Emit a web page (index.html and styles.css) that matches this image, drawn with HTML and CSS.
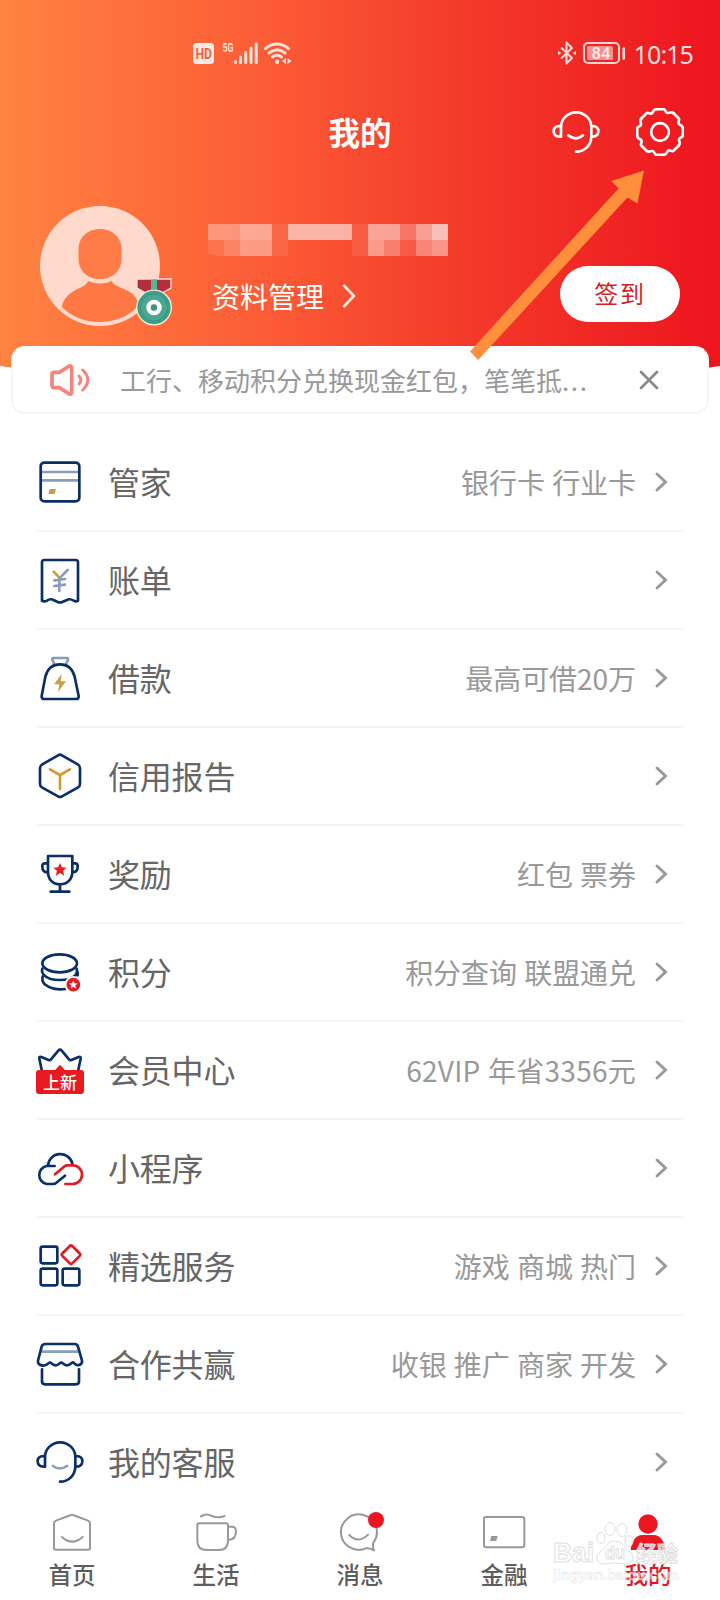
FILE: index.html
```html
<!DOCTYPE html>
<html lang="zh-CN">
<head>
<meta charset="utf-8">
<title>我的</title>
<link rel="stylesheet" href="styles.css">
</head>
<body>
<svg class="defs" aria-hidden="true">
  <defs>
    <symbol id="chev" viewBox="0 0 14 22"><path d="M3 3 11.500 11 3 19"/></symbol>
    <symbol id="headset" viewBox="0 0 144 144">
      <path d="M27 86V57a45.500 44 0 0 1 91 0v27c0 28-20 47-46 47M27 54h-4C9 54 5 62 5 70s4 16 18 16h4M118 54h3c13 0 18 7 18 16s-5 16-18 16h-3"/>
    </symbol>
    <path id="tooth" d="M-11-68.500H11C17-68 16-58 22-57S34-63 40.700-56.200"/>
    <path id="star" d="M0-20 5.600-7 20-6 9 3.500 12.500 18 0 10-12.500 18-9 3.500-20-6-5.600-7Z"/>
  </defs>
</svg>

<div class="phone">
  <header class="hero">
    <div class="status">
      <svg class="status-left" width="104" height="26" viewBox="0 0 104 26">
        <rect x="0" y="3" width="21" height="21" rx="3.500" fill="#ffeae3"/>
        <text class="hd" x="2.500" y="18.500" textLength="16.500" lengthAdjust="spacingAndGlyphs">HD</text>
        <text class="g5" x="29.500" y="12" textLength="11" lengthAdjust="spacingAndGlyphs">5G</text>
        <path d="M42.500 21.500v1M47.500 17v5.500M52.700 12.500v10M58 8v14.500M63.200 4v18.500" stroke="#ffe3da" stroke-width="3" stroke-linecap="round"/>
        <path d="M72.500 8.500q11.500-9 23 0M76 13q8-6.500 16 0M79.500 17q4.500-3.500 9 0" fill="none" stroke="#ffe3da" stroke-width="2.900" stroke-linecap="round"/>
        <circle cx="84" cy="21.700" r="2.200" fill="#ffe3da"/>
        <path d="M93 18v6l-4-3zM94.500 18v6l4-3z" fill="#ffe3da"/>
      </svg>
      <div class="status-right">
        <svg width="18" height="26" viewBox="0 0 18 26"><path d="M3 7.500 14 18 8.500 23.500V2.500L14 8 3 18.500" fill="none" stroke="#ffdcd8" stroke-width="2" stroke-linejoin="round"/><path d="M0 11l3.500 2L0 15zM18 11l-3.500 2 3.500 2z" fill="#ffdcd8"/></svg>
        <svg width="43" height="26" viewBox="0 0 43 26">
          <rect x="1" y="3" width="35" height="20" rx="4" fill="none" stroke="#ffd6d3" stroke-width="2"/>
          <rect x="4" y="6" width="26" height="14" rx="1.500" fill="#f78f8b"/>
          <path d="M40.700 8.500v10" stroke="#ffd6d3" stroke-width="2.600" stroke-linecap="round"/>
          <text class="batt" x="8.500" y="19" textLength="19" lengthAdjust="spacingAndGlyphs">84</text>
        </svg>
        <span class="clock">10:15</span>
      </div>
    </div>
    <div class="titlebar">
      <h1>我的</h1>
      <div class="actions">
        <svg width="48" height="48" viewBox="0 0 144 144" class="white-line"><use href="#headset"/><path d="M49 82q23 18 44 0"/></svg>
        <svg width="48" height="48" viewBox="0 0 144 144" class="white-line">
          <g transform="translate(72 72)"><circle r="26.500"/>
            <use href="#tooth"/><use href="#tooth" transform="rotate(45)"/><use href="#tooth" transform="rotate(90)"/><use href="#tooth" transform="rotate(135)"/><use href="#tooth" transform="rotate(180)"/><use href="#tooth" transform="rotate(225)"/><use href="#tooth" transform="rotate(270)"/><use href="#tooth" transform="rotate(315)"/>
          </g>
        </svg>
      </div>
    </div>
    <div class="profile">
      <svg class="avatar" width="136" height="124" viewBox="0 0 136 124">
        <circle cx="60" cy="60" r="60" fill="#ffd9cb"/>
        <path d="M60 23c13 0 21.500 9 21.500 20v10c0 12-9 20-21.500 20s-21.500-8-21.500-20V43c0-11 8.500-20 21.500-20Z" fill="#ff7b48"/>
        <path d="M48 75q12 5 24 0c2 8 26 7 26 25q-14 15.500-38 16-24-.5-38-15C25 83 46 83 48 75Z" fill="#ff7844"/>
        <path d="M97 73h34v9l-9 5h-16l-9-5Z" fill="#b52c3d" stroke="#fbe1d2" stroke-width="1.300"/>
        <path d="M111 73.500h6v10h-6z" fill="#58b497"/>
        <circle cx="114" cy="101.500" r="17.300" fill="#3e9e88" stroke="#f7eee0" stroke-width="1.300"/>
        <circle cx="114" cy="101.500" r="13.500" fill="#4aa791" stroke="#3a9580"/>
        <circle cx="114" cy="101.500" r="5.500" fill="#3d947f" stroke="#fff" stroke-width="4.500"/>
      </svg>
      <div class="who">
        <svg class="masked" width="240" height="32" viewBox="0 0 240 32" fill="#fcebe8" shape-rendering="crispEdges">
          <path opacity=".38" d="M0 0h32v16H0z"/><path opacity=".52" d="M32 0h32v16H32z"/><path opacity=".1" d="M64 0h16v32H64z"/><path opacity=".64" d="M80 0h64v16H80z"/><path opacity=".1" d="M144 0h16v32h-16z"/><path opacity=".56" d="M160 0h32v16h-32z"/><path opacity=".3" d="M192 0h16v16h-16z"/><path opacity=".55" d="M208 0h16v16h-16z"/><path opacity=".75" d="M224 0h16v16h-16z"/>
          <path opacity=".12" d="M0 16h16v16H8L0 29z"/><path opacity=".25" d="M16 16h16v16H16z"/><path opacity=".44" d="M32 16h32v16H32z"/><path opacity=".5" d="M160 16h16v16h-16z"/><path opacity=".34" d="M176 16h16v16h-16z"/><path opacity=".14" d="M192 16h16v16h-16z"/><path opacity=".4" d="M208 16h16v16h-16z"/><path opacity=".5" d="M224 16h16v16h-16z"/>
        </svg>
        <a class="manage">资料管理<svg width="15" height="24" viewBox="0 0 14 22"><path d="M2 1.500 11 11 2 20.500"/></svg></a>
      </div>
      <button class="sign">签到</button>
    </div>
  </header>

  <section class="notice">
    <svg width="42" height="34" viewBox="0 0 126 102" fill="none" stroke="#f5847c" stroke-width="11" stroke-linejoin="round" stroke-linecap="round">
      <path d="M6 35q0-7 7-7h15L58 9q7-3 7 5v74q0 8-7 5L28 74H13q-7 0-7-7Z"/><path d="M87 39q11 12 0 24M98 21q31 30 0 60" stroke-width="9"/>
    </svg>
    <p>工行、移动积分兑换现金红包，笔笔抵<span class="dots">...</span></p>
    <svg class="close" width="20" height="20" viewBox="0 0 20 20"><path d="M2 2 18 18M18 2 2 18"/></svg>
  </section>

  <main class="list">
    <div class="row"><svg class="ico" viewBox="0 0 144 144"><path class="pale" d="M16 42H128M16 67H128"/><rect x="14" y="14" width="116" height="116" rx="11"/><path class="goldfill" d="M41 93h19l-4 15H37z"/></svg><span class="label">管家</span><span class="value">银行卡 行业卡</span><svg class="go"><use href="#chev"/></svg></div>
    <div class="row"><svg class="ico" viewBox="0 0 144 144"><path d="M18 134V19q0-7 7-7h94q7 0 7 7v115q-6 4-13 0-12-8-22-1l-12 5q-7 3-14 0l-11-5q-10-7-21 1-9 4-15 0Z"/><path class="gold" d="M53 47 70 65"/><path class="pale" d="M95 42 70 67v38M55 73l32-4M55 90l32-4"/></svg><span class="label">账单</span><span class="value"></span><svg class="go"><use href="#chev"/></svg></div>
    <div class="row"><svg class="ico" viewBox="0 0 144 144"><path class="pale" d="M56 33 49 17q-1-5 4-5h40q4 0 3 5l-7 16"/><path d="M28 68Q38 31 72 31t44 37l12 58q1 9-8 9H25q-9 0-8-9Z"/><path class="goldfill" d="M77 60 54 91h16l-4 24 24-33H74z"/></svg><span class="label">借款</span><span class="value">最高可借20万</span><svg class="go"><use href="#chev"/></svg></div>
    <div class="row"><svg class="ico" viewBox="0 0 144 144"><path d="M66 10q6-4 12 0l47 27q7 4 7 11v48q0 7-7 11l-47 26q-6 4-12 0l-47-26q-7-4-7-11V48q0-7 7-11Z"/><path class="gold" d="M42 52 72 69l30-17M72 69v42"/></svg><span class="label">信用报告</span><span class="value"></span><svg class="go"><use href="#chev"/></svg></div>
    <div class="row"><svg class="ico" viewBox="0 0 144 144"><path d="M36 18h73v47c0 23-15 38-37 38S36 88 36 65ZM35 40h-8q-8 0-8 8v2q0 16 16 17M109 40h8q8 0 8 8v2q0 16-16 17M72 103v20M44 125h56"/><use class="redfill" href="#star" transform="translate(72 59)"/></svg><span class="label">奖励</span><span class="value">红包 票券</span><svg class="go"><use href="#chev"/></svg></div>
    <div class="row"><svg class="ico" viewBox="0 0 144 144"><ellipse cx="71" cy="46" rx="52" ry="27"/><path d="M19 62q-4 10 6 20c18 19 75 18 93 0q8-10 4-20M20 86q-4 11 6 23c14 12 39 18 62 14M125 74v8"/><circle cx="112" cy="110" r="26" fill="#fff" stroke="none"/><circle class="redfill" cx="112" cy="110" r="20.500"/><use href="#star" transform="translate(112 110) scale(.63)" class="whitefill"/></svg><span class="label">积分</span><span class="value">积分查询 联盟通兑</span><svg class="go"><use href="#chev"/></svg></div>
    <div class="row"><div class="ico crown"><svg class="ico" viewBox="0 0 144 144"><path d="M18 76 10 38q-2-7 6-5l22 9q4 2 7-2L67 14q5-6 10 0l22 26q3 4 7 2l22-9q7-2 6 5l-8 38"/><path class="redfill" d="M56 74 68 60q4-4 8 0l12 14z"/></svg><b>上新</b></div><span class="label">会员中心</span><span class="value vip">62VIP 年省3356元</span><svg class="go"><use href="#chev"/></svg></div>
    <div class="row"><svg class="ico" viewBox="0 0 144 144"><path d="M109 58a37 36 0 0 0-73 8M56 66H32a27.500 27.500 0 0 0 0 54h20q5 0 8-3l27-22"/><path class="red" d="M57 91 83 69q5-5 11-5h16a28 28 0 0 1 0 56H88"/></svg><span class="label">小程序</span><span class="value"></span><svg class="go"><use href="#chev"/></svg></div>
    <div class="row"><svg class="ico" viewBox="0 0 144 144"><rect x="14" y="14" width="50" height="50" rx="6"/><rect x="14" y="80" width="50" height="50" rx="6"/><rect x="80" y="80" width="50" height="50" rx="6"/><rect class="red" x="84" y="17" width="42" height="42" rx="5" transform="rotate(45 105 38)"/></svg><span class="label">精选服务</span><span class="value">游戏 商城 热门</span><svg class="go"><use href="#chev"/></svg></div>
    <div class="row"><svg class="ico" viewBox="0 0 144 144"><path class="pale" d="M20 35H124"/><path d="M28 12h88q8 0 10 8l12 42c2 13-14 18-23 8q-5-6-9 0-13 12-26 0-4-4-9 0-12 12-25 0-4-5-9 0c-10 11-33 8-31-8L17 20q2-8 11-8ZM18 88v36q0 9 9 9h93q9 0 9-9V88"/></svg><span class="label">合作共赢</span><span class="value">收银 推广 商家 开发</span><svg class="go"><use href="#chev"/></svg></div>
    <div class="row"><svg class="ico" viewBox="0 0 144 144"><use href="#headset"/><path class="pale" d="M51 84q20 15 42 0"/></svg><span class="label">我的客服</span><span class="value"></span><svg class="go"><use href="#chev"/></svg></div>
  </main>

  <nav class="tabs">
    <a><svg viewBox="0 0 144 144"><path d="M24 38 69 21q3-1 6 0l45 17q6 3 6 9v72q0 6-6 6H24q-6 0-6-6V47q0-6 6-9ZM42 87q30 28 62 0"/></svg>首页</a>
    <a><svg viewBox="0 0 144 144"><path d="M22 46h80q6 0 6 6v46q0 28-28 28H44q-28 0-28-28V52q0-6 6-6ZM108 56h12q12 0 12 14 0 26-24 26M27 25q15-10 33-1 17 8 38 0"/></svg>生活</a>
    <a><svg viewBox="0 0 144 144"><path d="M112 104a54 53 0 1 0-22 17q13-1 24 6-5-14-2-23ZM40 81q28 28 56-1"/><circle cx="120" cy="36" r="24" fill="#ec1620" stroke="none"/></svg>消息</a>
    <a><svg viewBox="0 0 144 144"><rect x="12" y="27" width="121" height="91" rx="7"/><path d="M34 84h19l-4 15H30z" fill="#999" stroke="none"/></svg>金融</a>
    <a class="on"><svg viewBox="0 0 144 144"><g fill="#ec1620" stroke="none"><circle cx="72" cy="48" r="29"/><path d="M20 126c2-28 17-45 35-45h34c18 0 33 17 35 45Z"/></g></svg>我的</a>
  </nav>

  <svg class="arrow" width="180" height="194" viewBox="468 168 180 194"><path d="M644 170.500 611.500 181l7 7.500L470 351.500l8 8.500L627.500 197.500l10 6Z" fill="#ff8f3a"/></svg>
  <svg class="mark" width="136" height="68" viewBox="0 0 136 68">
    <g fill="#fff" fill-opacity=".85" stroke="#dedede" stroke-width="1">
      <text x="2" y="42" font-size="28" textLength="41" lengthAdjust="spacingAndGlyphs">Bai</text>
      <ellipse cx="50" cy="18" rx="4" ry="5.500"/><ellipse cx="59" cy="9" rx="5" ry="6.500"/><ellipse cx="71" cy="10" rx="5" ry="6.500"/><ellipse cx="78" cy="21" rx="4" ry="5.500"/>
      <path d="M64 21c8 0 10 8 16 12 4 4 2 11-5 11-4 0-7-1-11-1s-7 1-11 1c-7 0-9-7-5-11 6-4 8-12 16-12Z"/>
      <text x="54" y="39" font-size="18" textLength="20" lengthAdjust="spacingAndGlyphs">du</text>
      <text class="cn" x="85" y="41" font-size="21" textLength="42" fill-opacity=".7">经验</text>
    </g>
    <text x="2" y="60" font-size="15" textLength="126" lengthAdjust="spacingAndGlyphs" fill="#fff" fill-opacity=".5" stroke="#dcdcdc" stroke-opacity=".7" stroke-width=".6">jingyan.baidu.com</text>
  </svg>
</div>
</body>
</html>
```
FILE: styles.css
```css
* { box-sizing: border-box; }
body { margin: 0; background: #fff; font-family: "Noto Sans", "Noto Sans CJK SC", sans-serif; }
.defs { position: absolute; width: 0; height: 0; }
.phone { position: relative; width: 720px; height: 1600px; overflow: hidden; background: #fff; }
svg { flex: none; }

.hero {
  height: 400px;
  margin-bottom: -54px;
  background: linear-gradient(90deg, #ff8342 0%, #fc6037 33%, #f43d2b 62%, #ee151f 99%);
  clip-path: path("M0 0H720V366Q360 420 0 366Z");
}
.status { display: flex; justify-content: space-between; height: 100px; padding: 40px 27px 0 193px; }
.status-right { display: flex; align-items: flex-start; gap: 7px; }
.clock { margin-left: 1px; line-height: 28px; font-family: "Noto Sans", sans-serif; font-size: 25px; letter-spacing: -.9px; color: #ffdedb; }
.hd { font: bold 14px Roboto, sans-serif; fill: #f2623f; }
.g5 { font: bold 13px Roboto, sans-serif; fill: #ffe3da; }
.batt { font: 500 17px Roboto, sans-serif; fill: #ffeceb; }
.titlebar { display: grid; grid-template-columns: 1fr auto 1fr; align-items: center; height: 64px; padding: 0 36px; }
.titlebar h1 { grid-column: 2; margin: 0 0 3px; font: bold 31.500px/48px "Noto Sans CJK SC", sans-serif; color: #fff; }
.actions { display: flex; justify-content: flex-end; gap: 36px; }
.white-line { fill: none; stroke: #fff; stroke-width: 8; stroke-linecap: round; stroke-linejoin: round; }
.profile { display: flex; align-items: flex-start; padding: 42px 40px 0; }
.who { display: flex; flex-direction: column; margin: 18px auto 0 32px; }
.masked { display: block; }
.manage { display: flex; align-items: center; gap: 18px; margin: 19px 0 0 4px; font: 28px/42px "Noto Sans CJK SC", sans-serif; color: #fff; }
.manage svg { fill: none; stroke: #ffe2da; stroke-width: 2.600; stroke-linecap: round; }
.sign { width: 120px; height: 56px; margin-top: 60px; padding: 0 0 3px; border: 0; border-radius: 28px; background: #fff; color: #d61c25; font: 24px/36px "Noto Sans CJK SC", sans-serif; letter-spacing: 1.800px; }

.notice { position: relative; display: flex; align-items: center; height: 68px; margin: 0 11px; padding: 0 48px 0 37px; border: 2px solid #f5f5f5; border-top-color: #fff; border-radius: 14px; background: #fff; }
.notice p { flex: 1; margin: 0 0 0 28px; font: 26px/38px "Noto Sans CJK SC", sans-serif; color: #999; white-space: nowrap; }
.dots { letter-spacing: 1.600px; }
.close { fill: none; stroke: #8b8b8b; stroke-width: 2.800; stroke-linecap: round; }

.list { height: 1066px; margin-top: 20px; padding: 0 36px; overflow: hidden; }
.row { display: flex; align-items: center; height: 98px; border-bottom: 2px solid #f4f4f4; color: #666; }
.ico { display: block; width: 48px; height: 48px; fill: none; stroke: #0a2f66; stroke-width: 8; stroke-linecap: round; stroke-linejoin: round; }
.label { margin: -2px 0 0 24px; font: 32px/48px "Noto Sans CJK SC", sans-serif; letter-spacing: -.2px; }
.value { margin-left: auto; font: 28px/42px "Noto Sans CJK SC", sans-serif; word-spacing: 1px; letter-spacing: -.05px; color: #999; }
.vip { letter-spacing: .25px; }
.go { width: 14px; height: 22px; margin: 0 16px 0 18px; fill: none; stroke: #999; stroke-width: 2.900; stroke-linecap: round; }
.pale { stroke: #879dbd; stroke-width: 8; }
.gold { stroke: #d39a31; stroke-width: 8; }
.red { stroke: #e01b22; }
.goldfill { fill: #cb9d48; stroke: none; }
.redfill { fill: #e91a22; stroke: none; }
.whitefill { fill: #fff; stroke: none; }
.crown { position: relative; }
.crown b { position: absolute; left: 0; bottom: 0; width: 48px; height: 24px; border-radius: 3px; background: #e91a22; color: #fff; font: 500 17px/24px "Noto Sans CJK SC", sans-serif; text-align: center; }

.tabs { display: grid; grid-template-columns: repeat(5, 1fr); height: 100px; padding-top: 8px; background: #fff; }
.tabs a { display: flex; flex-direction: column; align-items: center; font: 500 23.500px/36px "Noto Sans CJK SC", sans-serif; color: #5d5d5d; }
.tabs svg { width: 48px; height: 48px; fill: none; stroke: #999; stroke-width: 6; stroke-linecap: round; stroke-linejoin: round; }
.tabs .on { color: #e31822; }

.arrow { position: absolute; left: 468px; top: 168px; }
.mark { position: absolute; left: 551px; top: 1520px; font-family: "Liberation Sans", sans-serif; font-weight: bold; }
.mark .cn { font-family: "Noto Sans CJK SC", sans-serif; }
```
